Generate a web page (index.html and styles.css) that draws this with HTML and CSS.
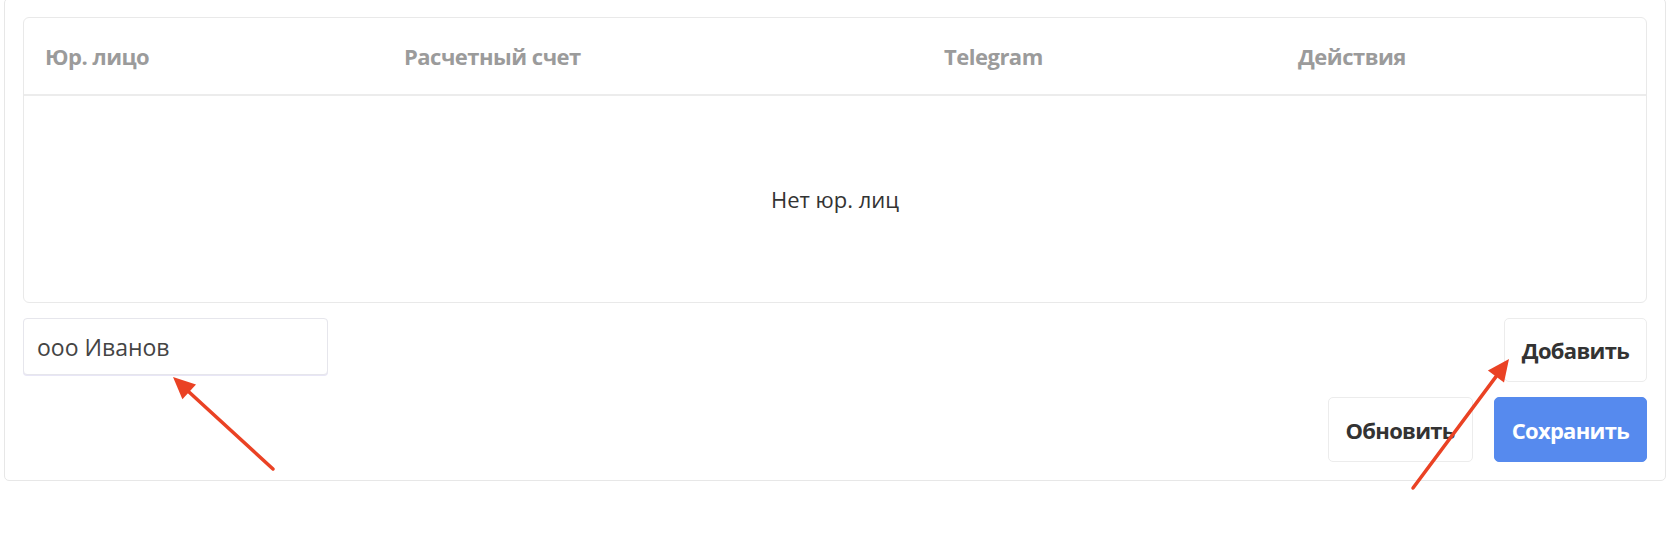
FILE: index.html
```html
<!DOCTYPE html>
<html lang="ru">
<head>
<meta charset="utf-8">
<title>Юр. лица</title>
<link rel="stylesheet" href="styles.css">
</head>
<body>
<div class="card">
  <div class="table">
    <div class="thead">
      <div class="th">Юр. лицо</div>
      <div class="th">Расчетный счет</div>
      <div class="th">Telegram</div>
      <div class="th">Действия</div>
    </div>
    <div class="empty">Нет юр. лиц</div>
  </div>
  <div class="add-row">
    <input class="input" type="text" value="ооо Иванов">
    <button class="btn btn-add" type="button">Добавить</button>
  </div>
  <div class="actions">
    <button class="btn" type="button">Обновить</button>
    <button class="btn btn-primary" type="button">Сохранить</button>
  </div>
</div>
<svg class="annotations" width="1680" height="545" viewBox="0 0 1680 545">
  <line x1="273" y1="469" x2="189" y2="392" class="arrow-line"/>
  <polygon points="173,377 196,384.5 182.4,399.3" class="arrow-head"/>
  <line x1="1413" y1="488" x2="1496" y2="376.6" class="arrow-line"/>
  <polygon points="1509,359 1504,382.6 1487.9,370.6" class="arrow-head"/>
</svg>
</body>
</html>
```
FILE: styles.css
```css
* {
  box-sizing: border-box;
}

html, body {
  margin: 0;
  padding: 0;
  background: #ffffff;
  overflow: hidden;
}

body {
  font-family: "Open Sans", "Noto Sans", sans-serif;
  color: #333333;
  width: 1680px;
  height: 545px;
  position: relative;
}

.card {
  margin: -2px 14px 0 4px;
  border: 1px solid #e7e7e7;
  border-radius: 5px;
  padding: 18px;
}

.table {
  border: 1px solid #e9e9e9;
  border-radius: 6px;
}

.thead {
  display: grid;
  grid-template-columns: 359px 540px 354px 1fr;
  height: 78px;
  border-bottom: 2px solid #ececec;
  align-items: center;
}

.th {
  padding-left: 21px;
  font-size: 22px;
  font-weight: 700;
  color: #9b9b9b;
  letter-spacing: -0.5px;
}

.empty {
  height: 206px;
  display: flex;
  align-items: center;
  justify-content: center;
  font-size: 22px;
  color: #333333;
}

.add-row {
  margin-top: 15px;
  display: flex;
  justify-content: space-between;
  align-items: flex-start;
}

.input {
  width: 305px;
  height: 57px;
  border: 1px solid #e6e6ec;
  border-radius: 4px;
  box-shadow: 0 1px 0 #e8e6f6;
  padding: 0 13px;
  font-family: "Open Sans", "Noto Sans", sans-serif;
  font-size: 23px;
  color: #444444;
  outline: none;
  background: #ffffff;
}

.btn {
  height: 65px;
  padding: 0 17px;
  border: 1px solid #ececec;
  border-radius: 5px;
  background: #ffffff;
  font-family: "Open Sans", "Noto Sans", sans-serif;
  font-size: 22px;
  font-weight: 700;
  color: #333333;
  letter-spacing: -0.7px;
}

.btn-add {
  height: 64px;
}

.actions {
  margin-top: 15px;
  display: flex;
  justify-content: flex-end;
  gap: 21px;
}

.btn-primary {
  background: #568aee;
  border-color: #568aee;
  color: #ffffff;
}

.annotations {
  position: absolute;
  left: 0;
  top: 0;
  pointer-events: none;
}

.arrow-line {
  stroke: #ea4224;
  stroke-width: 3.5;
  stroke-linecap: round;
}

.arrow-head {
  fill: #ea4224;
}
```
